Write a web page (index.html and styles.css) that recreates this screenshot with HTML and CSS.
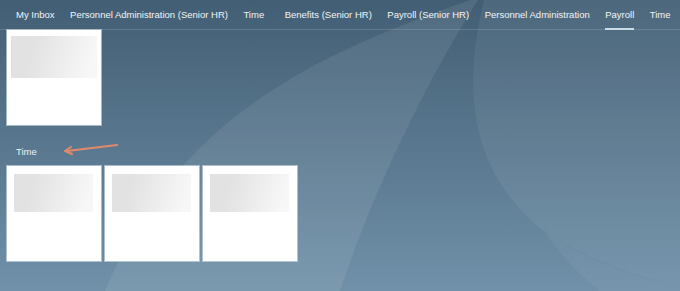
FILE: index.html
```html
<!DOCTYPE html>
<html lang="en">
<head>
	<meta charset="UTF-8">
	<title>Home</title>
	<link rel="stylesheet" href="styles.css">
</head>
<body>
	<svg class="backdrop" viewBox="0 0 680 291" preserveAspectRatio="none">
		<defs>
			<linearGradient id="bg" x1="0" y1="0" x2="0" y2="1">
				<stop offset="0" stop-color="#425e74"/>
				<stop offset="1" stop-color="#7091a9"/>
			</linearGradient>
		</defs>
		<rect width="680" height="291" fill="url(#bg)"/>
		<path d="M470 0 C330 50 180 110 105 291 L340 291 C380 170 440 60 478 0 Z" fill="#fff" fill-opacity="0.08"/>
		<path d="M484 0 C462 90 470 170 540 228 C590 262 640 278 680 286 L680 0 Z" fill="#fff" fill-opacity="0.06"/>
		<path d="M545 232 C595 264 640 279 680 286 L680 291 L600 291 C580 275 560 255 545 232 Z" fill="#fff" fill-opacity="0.05"/>
	</svg>

	<nav class="tabs">
		<a href="#">My Inbox</a>
		<a href="#">Personnel Administration (Senior HR)</a>
		<a href="#">Time</a>
		<a href="#" class="wide">Benefits (Senior HR)</a>
		<a href="#">Payroll (Senior HR)</a>
		<a href="#">Personnel Administration</a>
		<a href="#" class="active">Payroll</a>
		<a href="#">Time</a>
	</nav>

	<section class="group">
		<div class="tiles">
			<div class="tile tile-big"><div class="tile-img"></div></div>
		</div>
	</section>

	<section class="group">
		<div class="group-title">Time</div>
		<svg class="arrow" viewBox="0 0 60 12">
			<path d="M55 2 L5 8" stroke="#e08a6c" stroke-width="2" stroke-linecap="round" fill="none"/>
			<path d="M9 4 L3 8 L10 11" stroke="#e08a6c" stroke-width="2" stroke-linecap="round" stroke-linejoin="round" fill="none"/>
		</svg>
		<div class="tiles">
			<div class="tile"><div class="tile-img"></div></div>
			<div class="tile"><div class="tile-img"></div></div>
			<div class="tile"><div class="tile-img"></div></div>
		</div>
	</section>
</body>
</html>
```

FILE: styles.css
```css
body {
	margin: 0;
	height: 291px;
	overflow: hidden;
	position: relative;
	font-family: "Liberation Sans", Arial, sans-serif;
	color: #fff;
}

.backdrop {
	position: absolute;
	left: 0;
	top: 0;
	width: 100%;
	height: 100%;
	z-index: -1;
}

.tabs {
	display: flex;
	gap: 15.5px;
	height: 29px;
	padding-left: 16px;
	border-bottom: 1px solid rgba(255, 255, 255, 0.14);
	white-space: nowrap;
}

.tabs a {
	color: #f2f5f8;
	text-decoration: none;
	font-size: 9.5px;
	line-height: 29px;
	position: relative;
}

.tabs a.wide {
	margin-left: 5px;
}

.tabs a.active::after {
	content: "";
	position: absolute;
	left: 0;
	right: 0;
	bottom: -1px;
	height: 2px;
	background: #c9dbe6;
}

.group {
	padding-left: 7px;
	position: relative;
}

.tiles {
	display: flex;
	gap: 4px;
}

.tile {
	width: 94px;
	height: 95px;
	background: #fff;
	box-sizing: border-box;
	padding: 8px 8px 0 7px;
	box-shadow: 0 0 0 1px rgba(220, 230, 238, 0.6);
}

.tile-big {
	padding: 6px 4px 0 4px;
}

.tile-img {
	height: 38px;
	background: linear-gradient(105deg, #e2e2e2 25%, #f7f7f7 90%);
}

.tile-big .tile-img {
	height: 42px;
}

.group-title {
	font-size: 9.5px;
	color: #eef3f6;
	padding: 21px 0 9px 9px;
}

.arrow {
	position: absolute;
	left: 62px;
	top: 18px;
	width: 60px;
	height: 12px;
}
```
